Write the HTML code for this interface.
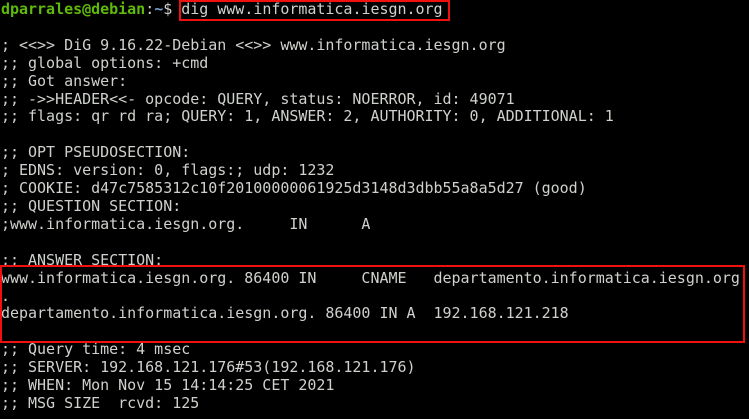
<!DOCTYPE html>
<html><head><meta charset="utf-8"><style>
html,body{margin:0;padding:0;background:#000;width:749px;height:419px;overflow:hidden}
pre{margin:0;padding:1px 0 0 1px;font-family:"DejaVu Sans Mono","Liberation Mono",monospace;font-size:15px;line-height:17.9px;color:#cfd2cc;white-space:pre;letter-spacing:-0.02px}
.g{color:#5fba0a;font-weight:bold}.b{color:#729fcf;font-weight:bold}
.box{position:absolute;border:2px solid #f01010;box-sizing:border-box}
</style></head><body>
<pre><span class="g">dparrales@debian</span>:<span class="b">~</span>$ dig www.informatica.iesgn.org

; &lt;&lt;&gt;&gt; DiG 9.16.22-Debian &lt;&lt;&gt;&gt; www.informatica.iesgn.org
;; global options: +cmd
;; Got answer:
;; -&gt;&gt;HEADER&lt;&lt;- opcode: QUERY, status: NOERROR, id: 49071
;; flags: qr rd ra; QUERY: 1, ANSWER: 2, AUTHORITY: 0, ADDITIONAL: 1

;; OPT PSEUDOSECTION:
; EDNS: version: 0, flags:; udp: 1232
; COOKIE: d47c7585312c10f20100000061925d3148d3dbb55a8a5d27 (good)
;; QUESTION SECTION:
;www.informatica.iesgn.org.     IN      A

;; ANSWER SECTION:
www.informatica.iesgn.org. 86400 IN     CNAME   departamento.informatica.iesgn.org
.
departamento.informatica.iesgn.org. 86400 IN A  192.168.121.218

;; Query time: 4 msec
;; SERVER: 192.168.121.176#53(192.168.121.176)
;; WHEN: Mon Nov 15 14:14:25 CET 2021
;; MSG SIZE  rcvd: 125</pre>
<div class="box" style="left:179px;top:0;width:271px;height:21px"></div>
<div class="box" style="left:0;top:265px;width:745px;height:78px"></div>
</body></html>
